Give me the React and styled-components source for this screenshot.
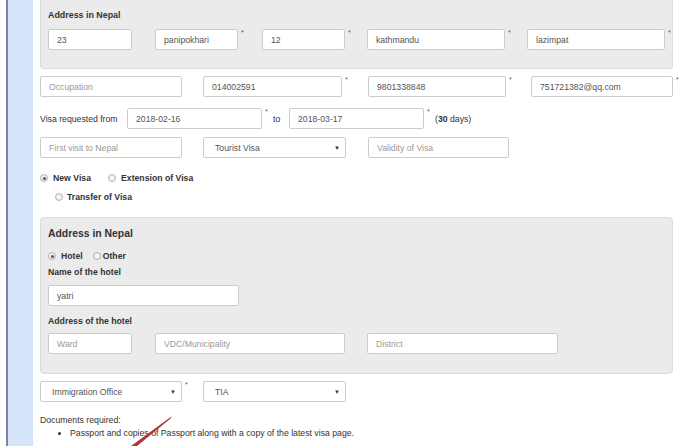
import React from 'react';
import styled, { createGlobalStyle } from 'styled-components';

const GlobalStyle = createGlobalStyle`
  html, body {
    margin: 0;
    padding: 0;
    background: #ffffff;
    overflow: hidden;
  }
  body {
    font-family: "Liberation Sans", Arial, sans-serif;
    font-size: 8.7px;
    color: #333;
  }
`;

const Page = styled.div`
  position: relative;
  display: flex;
  width: 679px;
  height: 446px;
  overflow: hidden;
`;

const Sidebar = styled.div`
  flex: none;
  width: 25px;
  margin-left: 6px;
  border-left: 2px solid #7b8799;
  background: #d5e4f9;
`;

const Content = styled.div`
  flex: none;
  width: 633px;
  margin-left: 7px;
`;

const Panel = styled.div`
  background: #ebebeb;
  border: 1px solid #dcdcdc;
  border-radius: ${(p) => (p.$flatTop ? '0 0 4px 4px' : '4px')};
  border-top: ${(p) => (p.$flatTop ? 'none' : '1px solid #dcdcdc')};
  padding: ${(p) => p.$pad};
  margin-top: ${(p) => p.$mt || 0}px;
`;

const Title = styled.div`
  font-weight: bold;
  font-size: ${(p) => p.$size}px;
  line-height: 12px;
  color: #333;
  margin-bottom: ${(p) => p.$mb}px;
`;

const Row = styled.div`
  display: flex;
  align-items: center;
  margin-top: ${(p) => p.$mt || 0}px;
  padding-left: ${(p) => p.$indent || 0}px;
`;

const Cell = styled.div`
  flex: none;
  display: flex;
  align-items: flex-start;
  width: ${(p) => p.$w}px;
`;

const Input = styled.input`
  box-sizing: border-box;
  flex: none;
  width: ${(p) => p.$w}px;
  height: 21px;
  padding: 0 8px;
  border: 1px solid #cccccc;
  border-radius: 2px;
  background: #fff;
  font-family: "Liberation Sans", Arial, sans-serif;
  font-size: 8.7px;
  color: #555;
  outline: none;
  &::placeholder {
    color: #9a9a9a;
  }
`;

const SelectBox = styled.div`
  box-sizing: border-box;
  flex: none;
  width: ${(p) => p.$w}px;
  height: 21px;
  padding: 0 5px 0 11px;
  display: flex;
  align-items: center;
  justify-content: space-between;
  border: 1px solid #cccccc;
  border-radius: 2px;
  background: #fff;
  color: #555;
`;

const Caret = styled.span`
  font-size: 6px;
  color: #333;
`;

const Star = styled.span`
  font-size: 7px;
  line-height: 8px;
  color: #555;
  margin-left: 3px;
`;

const Label = styled.span`
  flex: none;
  width: ${(p) => p.$w}px;
  color: #333;
`;

const Days = styled.span`
  color: #333;
  & b {
    font-weight: bold;
  }
`;

const RadioItem = styled.label`
  display: flex;
  align-items: center;
  font-weight: bold;
  color: #333;
  margin-right: ${(p) => p.$mr || 0}px;
`;

const Dot = styled.span`
  box-sizing: border-box;
  width: 8px;
  height: 8px;
  border-radius: 50%;
  border: 1px solid #b5b5b5;
  background: radial-gradient(circle, #ffffff 0%, #dedede 100%);
  margin-right: ${(p) => p.$gap}px;
  display: flex;
  align-items: center;
  justify-content: center;
  &::after {
    content: '';
    width: 3px;
    height: 3px;
    border-radius: 50%;
    background: ${(p) => (p.$on ? '#555' : 'transparent')};
  }
`;

const SubLabel = styled.div`
  font-weight: bold;
  line-height: 12px;
  color: #333;
  margin-top: ${(p) => p.$mt}px;
`;

const Docs = styled.div`
  margin-top: 12px;
  line-height: 13px;
  color: #333;
`;

const Bullets = styled.ul`
  margin: 0;
  padding-left: 30px;
  list-style: disc;
`;

const Arrow = styled.svg`
  position: absolute;
  left: 0;
  top: 0;
  pointer-events: none;
`;

function Field({ w, slot = 0, star, value, placeholder }) {
  return (
    <Cell $w={w + slot}>
      <Input $w={w} defaultValue={value} placeholder={placeholder} />
      {star && <Star>*</Star>}
    </Cell>
  );
}

function Select({ w, slot = 0, star, value }) {
  return (
    <Cell $w={w + slot}>
      <SelectBox $w={w}>
        <span>{value}</span>
        <Caret>▼</Caret>
      </SelectBox>
      {star && <Star>*</Star>}
    </Cell>
  );
}

function Radio({ on, label, mr, gap = 5 }) {
  return (
    <RadioItem $mr={mr}>
      <Dot $on={on} $gap={gap} />
      {label}
    </RadioItem>
  );
}

export default function App() {
  return (
    <Page>
      <GlobalStyle />
      <Sidebar />
      <Content>
        <Panel $flatTop $pad="9px 7px 18px 7px">
          <Title $size={8.9} $mb={8}>Address in Nepal</Title>
          <Row>
            <Field w={84} slot={23} value="23" />
            <Field w={83} slot={24} star value="panipokhari" />
            <Field w={83} slot={22} star value="12" />
            <Field w={138} slot={22} star value="kathmandu" />
            <Field w={138} star value="lazimpat" />
          </Row>
        </Panel>

        <Row $mt={7}>
          <Field w={142} slot={21} placeholder="Occupation" />
          <Field w={139} slot={26} star value="014002591" />
          <Field w={138} slot={25} star value="9801338848" />
          <Field w={142} star value="751721382@qq.com" />
        </Row>

        <Row $mt={11}>
          <Label $w={87}>Visa requested from</Label>
          <Field w={135} slot={11} star value="2018-02-16" />
          <Label $w={16}>to</Label>
          <Field w={135} slot={11} star value="2018-03-17" />
          <Days>(<b>30</b> days)</Days>
        </Row>

        <Row $mt={8}>
          <Field w={142} slot={21} placeholder="First visit to Nepal" />
          <Select w={143} slot={22} value="Tourist Visa" />
          <Field w={141} placeholder="Validity of Visa" />
        </Row>

        <Row $mt={15}>
          <Radio on label="New Visa" mr={17} />
          <Radio label="Extension of Visa" />
        </Row>
        <Row $mt={9} $indent={15}>
          <Radio label="Transfer of Visa" gap={4} />
        </Row>

        <Panel $mt={15} $pad="10px 7px 19px 7px">
          <Title $size={10.4} $mb={11}>Address in Nepal</Title>
          <Row>
            <Radio on label="Hotel" mr={10} />
            <Radio label="Other" gap={2} />
          </Row>
          <SubLabel $mt={5}>Name of the hotel</SubLabel>
          <Row $mt={7}>
            <Field w={191} value="yatri" />
          </Row>
          <SubLabel $mt={9}>Address of the hotel</SubLabel>
          <Row $mt={6}>
            <Field w={84} slot={23} placeholder="Ward" />
            <Field w={190} slot={22} placeholder="VDC/Municipality" />
            <Field w={191} placeholder="District" />
          </Row>
        </Panel>

        <Row $mt={7}>
          <Select w={142} slot={21} star value="Immigration Office" />
          <Select w={143} value="TIA" />
        </Row>

        <Docs>
          Documents required:
          <Bullets>
            <li>Passport and copies of Passport along with a copy of the latest visa page.</li>
          </Bullets>
        </Docs>
      </Content>

      <Arrow width="679" height="446" viewBox="0 0 679 446">
        <path d="M172 416 L168 419 L131 446 L137 446 L170 419 Z" fill="#b3323c" />
      </Arrow>
    </Page>
  );
}
